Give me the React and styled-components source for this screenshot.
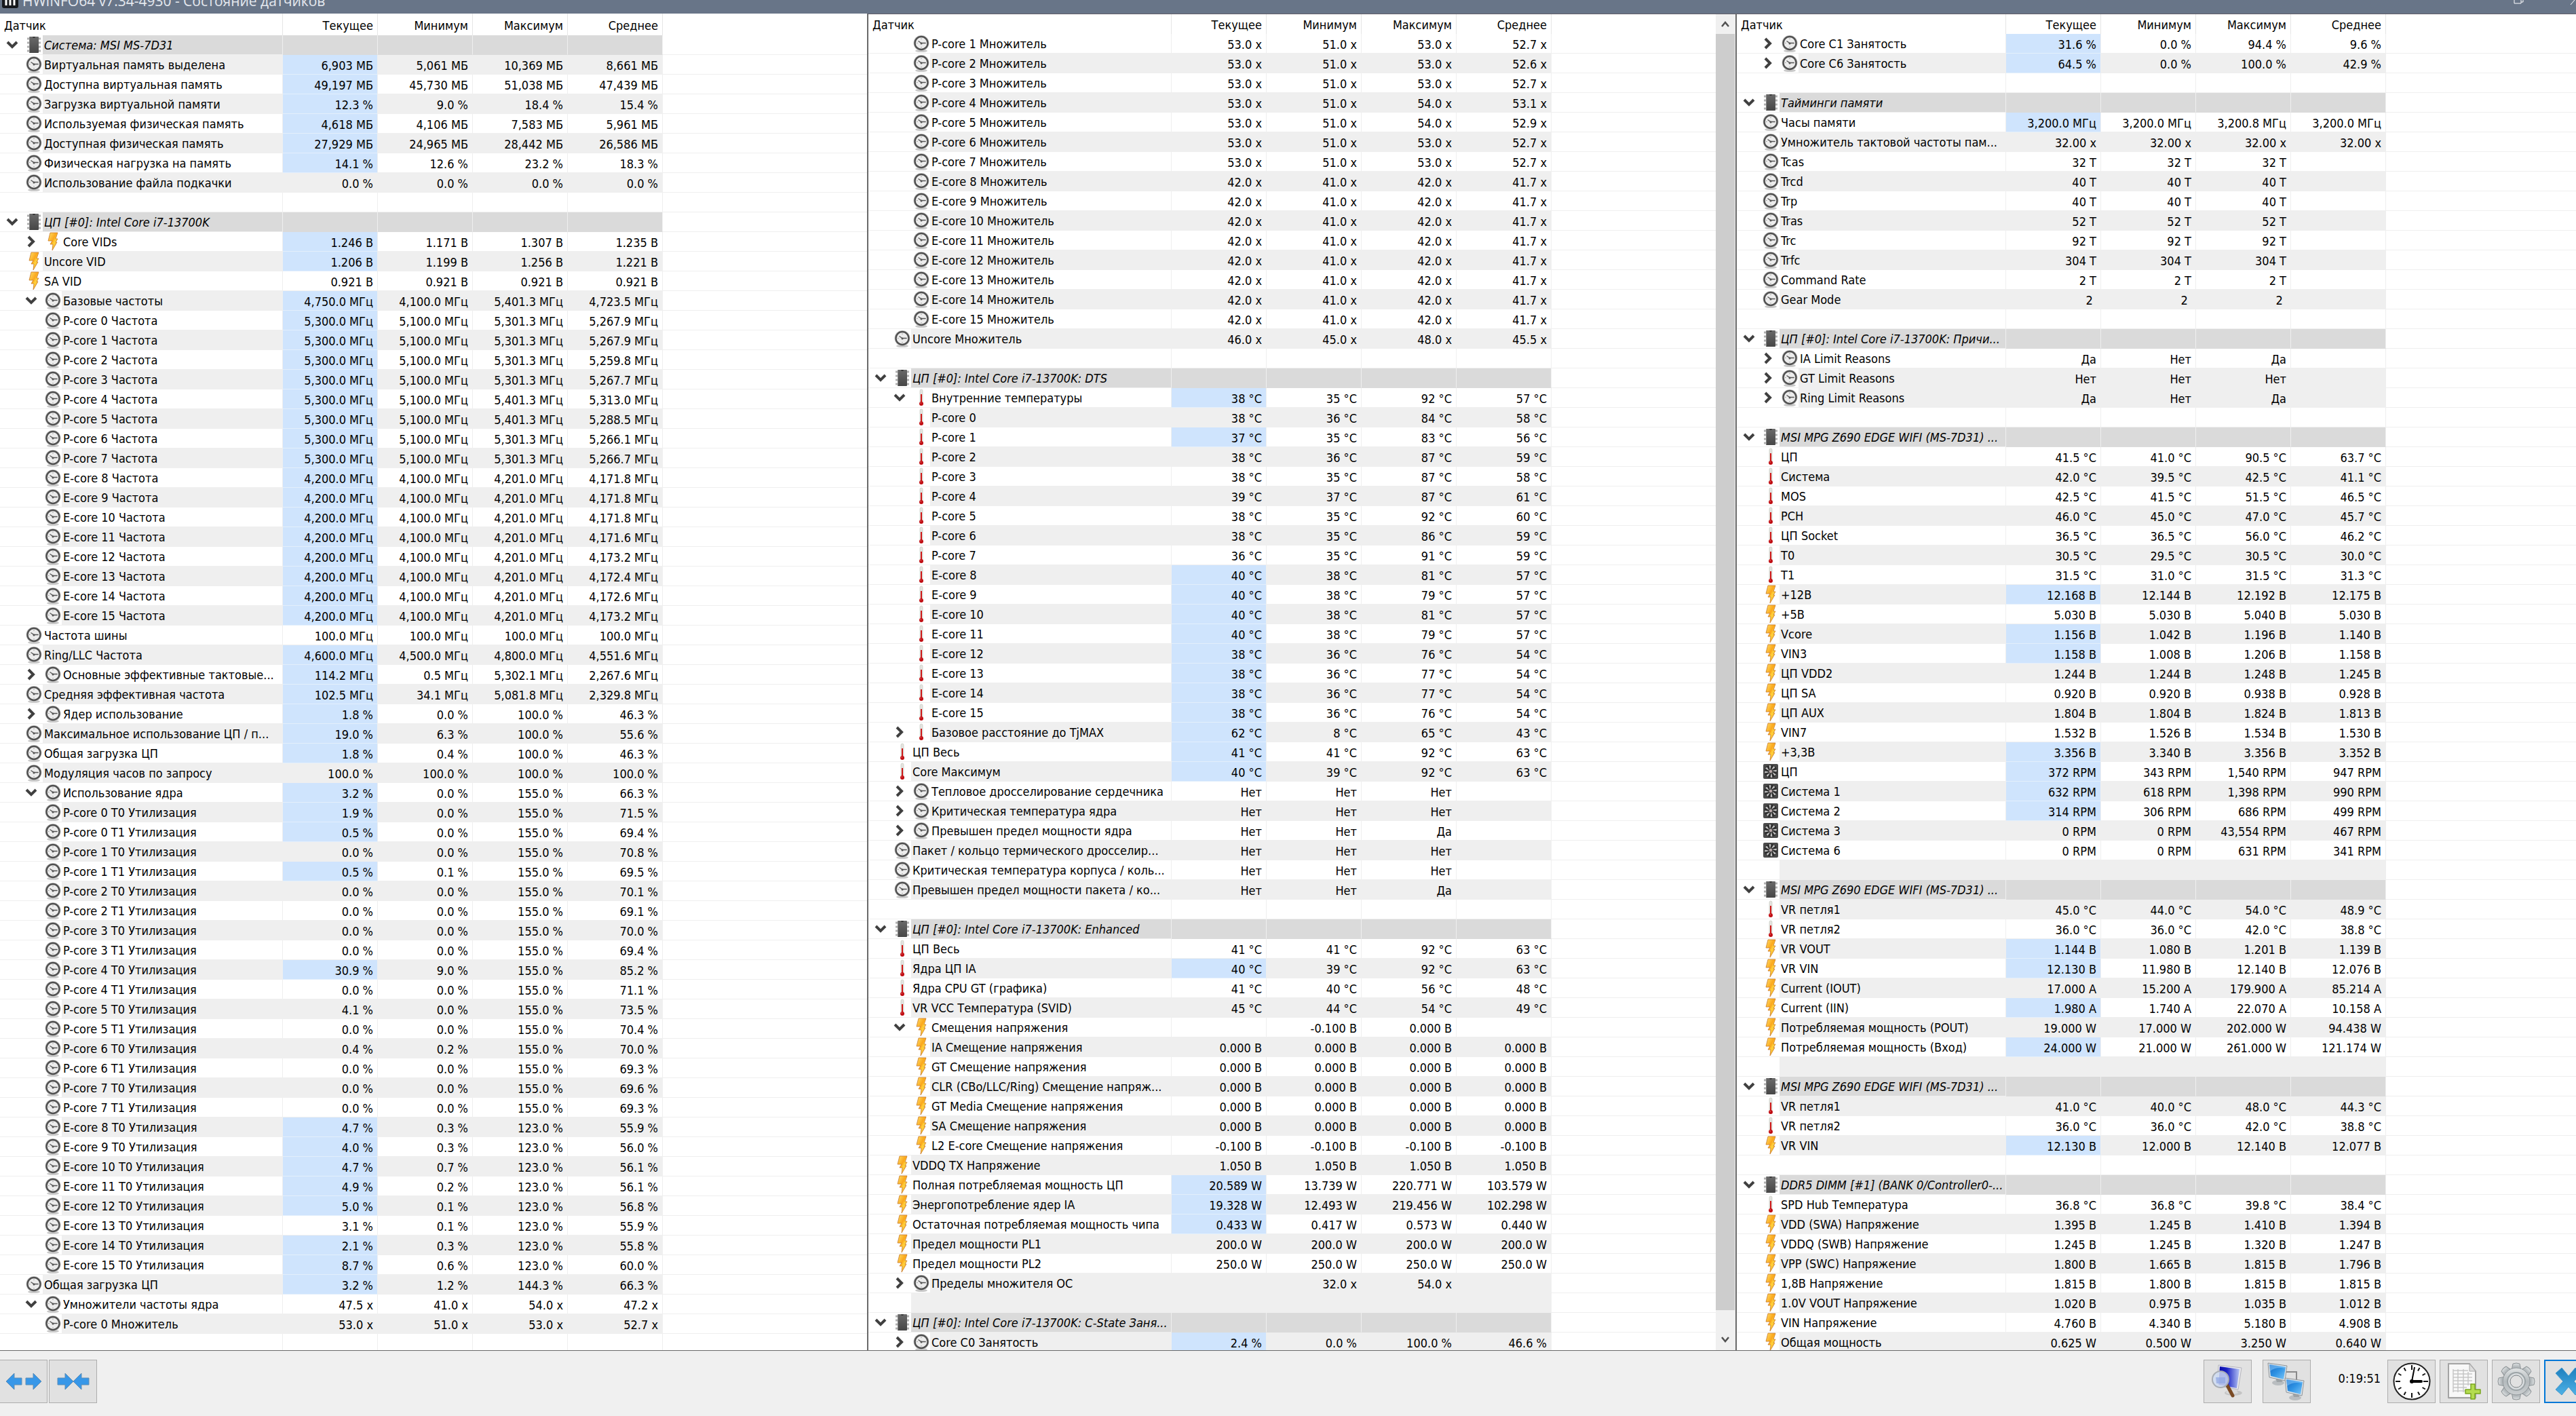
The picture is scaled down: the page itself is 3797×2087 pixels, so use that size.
import React from "react";
import styled, { createGlobalStyle, css } from "styled-components";

const GlobalStyle = createGlobalStyle`
  * {
    box-sizing: border-box;
  }
  body {
    margin: 0;
    background: #f0f0f0;
    color: #000;
    font-family: "DejaVu Sans Condensed", Tahoma, "Noto Sans", sans-serif;
    font-size: 18px;
  }
  button {
    font: inherit;
    padding: 0;
  }
`;

const Window = styled.div`
  display: flex;
  flex-direction: column;
  height: 100vh;
  overflow: hidden;
`;

const TitleBar = styled.header`
  display: flex;
  align-items: flex-end;
  justify-content: space-between;
  flex: none;
  height: 20px;
  padding-left: 3px;
  background: #687588;
`;

const TitleGroup = styled.div`
  display: flex;
  align-items: flex-end;
  gap: 6px;
  padding-bottom: 4px;
`;

const Title = styled.h1`
  margin: 0;
  color: #e4e8ee;
  font-family: "Open Sans", "Noto Sans", sans-serif;
  font-size: 21px;
  font-weight: 400;
  line-height: 30px;
  white-space: nowrap;
`;

const AppIcon = styled.svg`
  flex: none;
  margin-bottom: 4px;
`;

const WindowButtons = styled.div`
  display: flex;
  gap: 60px;
  height: 20px;
`;

const WindowButton = styled.button`
  display: flex;
  width: 16px;
  height: 20px;
  border: 0;
  background: none;
`;

const Panels = styled.main`
  display: grid;
  grid-template-columns: minmax(0, 1278fr) minmax(0, 1280fr) minmax(0, 1239fr);
  flex: 1;
  min-height: 0;
  background: #fff;
`;

const Panel = styled.section`
  display: flex;
  min-height: 0;
  overflow: hidden;
  border-left: ${(props) => (props.$divided ? "2px solid #696969" : "0")};
  border-top: ${(props) => (props.$divided ? "1px solid #605d68" : "0")};
`;

const TableArea = styled.div`
  flex: 1;
  min-width: 0;
  overflow: hidden;
`;

const Table = styled.table`
  width: 100%;
  table-layout: fixed;
  border-collapse: separate;
  border-spacing: 0;
`;

const Col = styled.col`
  width: ${(props) => props.$width}px;
`;

const HeadCell = styled.th`
  height: ${(props) => (props.$divided ? 29 : 32)}px;
  padding: ${(props) => (props.$first ? "2px 6px 0" : "2px 6px 0 0")};
  border-right: 1px solid #e5e5e5;
  font-weight: 400;
  text-align: ${(props) => (props.$first ? "left" : "right")};
  white-space: nowrap;

  &:last-child {
    border-right: 0;
  }
`;

const rowColor = (props) =>
  props.$group ? "#dadada" : props.$alt ? "#efefef" : "#fff";

const cell = css`
  height: 29px;
  padding: 0;
  border-bottom: 1px solid #efefef;
  font-weight: 400;
  white-space: nowrap;
  overflow: hidden;
`;

const NameCell = styled.th`
  ${cell}
  text-align: left;
`;

const ValueCell = styled.td`
  ${cell}
  padding: 2px 6px 0 0;
  border-right: 1px solid #efefef;
  border-bottom-color: ${(props) =>
    props.$hot ? "#e3effc" : props.$group ? "#dadada" : "#efefef"};
  background: ${(props) => (props.$hot ? "#cfe4fd" : rowColor(props))};
  text-align: right;
`;

const FillerCell = styled.td`
  ${cell}
`;

const NameLine = styled.div`
  display: flex;
  align-items: stretch;
  height: 28px;
  padding-left: ${(props) => props.$depth * 28}px;
`;

const ToggleSlot = styled.span`
  display: flex;
  flex: none;
  align-items: center;
  justify-content: center;
  width: 36px;
`;

const Toggle = styled.button`
  display: flex;
  align-items: center;
  justify-content: center;
  width: 20px;
  height: 20px;
  border: 0;
  background: none;
`;

const IconSlot = styled.span`
  display: flex;
  flex: none;
  align-items: center;
  justify-content: center;
  width: 27px;
`;

const Label = styled.span`
  flex: 1;
  min-width: 0;
  padding: 2px 0 0 2px;
  overflow: hidden;
  border-right: 1px solid #efefef;
  background: ${rowColor};
  font-style: ${(props) => (props.$group ? "italic" : "normal")};
  line-height: 26px;
`;

const ScrollBar = styled.div`
  display: flex;
  flex: none;
  flex-direction: column;
  width: 29px;
  padding-right: 1px;
  background: #f0f0f0;
`;

const ScrollButton = styled.button`
  display: flex;
  align-items: center;
  justify-content: center;
  height: ${(props) => (props.$down ? 30 : 29)}px;
  border: 0;
  background: #f0f0f0;
`;

const ScrollTrack = styled.div`
  flex: 1;
  padding-bottom: 29px;
`;

const ScrollThumb = styled.div`
  height: 100%;
  background: #cdcdcd;
`;

const Footer = styled.footer`
  display: flex;
  align-items: center;
  justify-content: space-between;
  flex: none;
  padding: 13px 0 19px;
  border-top: 1px solid #696969;
  background: #f0f0f0;
`;

const Tools = styled.div`
  display: flex;
  align-items: center;
  gap: ${(props) => props.$gap}px;
`;

const LeftTools = styled(Tools)`
  margin-left: -1px;
`;

const RightTools = styled(Tools)`
  margin-right: -24px;
`;

const ToolButton = styled.button`
  display: flex;
  align-items: center;
  justify-content: center;
  flex: none;
  width: 71px;
  height: 64px;
  border: ${(props) => (props.$active ? "2px solid #0078d7" : "1px solid #adadad")};
  background: #e1e1e1;
`;

const Elapsed = styled.time`
  padding: 0 3px 9px 34px;
`;

const Defs = styled.svg`
  position: absolute;
  width: 0;
  height: 0;
`;

const Gradients = () => (
  <Defs aria-hidden="true">
    <defs>
      <linearGradient id="bolt" x1="0" y1="0" x2="1" y2="1">
        <stop offset="0" stopColor="#ffe26a" />
        <stop offset="0.45" stopColor="#fba71c" />
        <stop offset="0.6" stopColor="#ffd23c" />
        <stop offset="1" stopColor="#f59a1a" />
      </linearGradient>
      <linearGradient id="chip" x1="0" y1="0" x2="0" y2="1">
        <stop offset="0" stopColor="#6a6a6a" />
        <stop offset="1" stopColor="#464646" />
      </linearGradient>
      <linearGradient id="screen" x1="0" y1="0" x2="1" y2="1">
        <stop offset="0" stopColor="#1668c4" />
        <stop offset="0.5" stopColor="#2f93e4" />
        <stop offset="1" stopColor="#7cc7fa" />
      </linearGradient>
      <linearGradient id="navy" x1="0" y1="0" x2="1" y2="0">
        <stop offset="0" stopColor="#0808a8" />
        <stop offset="0.4" stopColor="#1c24c4" />
        <stop offset="1" stopColor="#b4c4f4" />
      </linearGradient>
      <linearGradient id="metal" x1="0" y1="0" x2="0" y2="1">
        <stop offset="0" stopColor="#dfe2e3" />
        <stop offset="0.5" stopColor="#b4babd" />
        <stop offset="1" stopColor="#c9cdcf" />
      </linearGradient>
      <linearGradient id="cross" x1="0" y1="0" x2="0" y2="1">
        <stop offset="0" stopColor="#1e7fbe" />
        <stop offset="1" stopColor="#4db1e6" />
      </linearGradient>
    </defs>
  </Defs>
);

const Clock = () => (
  <svg width="24" height="26" viewBox="0 0 24 26">
    <ellipse cx="12" cy="24" rx="9" ry="2" fill="#c9c9c9" />
    <circle cx="12" cy="12.500" r="11.500" fill="#c4c4c4" />
    <circle cx="12" cy="12.500" r="9.500" fill="#ececec" stroke="#505050" strokeWidth="2.400" />
    <path d="M12 5.500v1.500M12 18v1.500M5 12.500h1.500M17.500 12.500H19" stroke="#999" />
    <path d="M7.500 9.500l4.500 3h6.500" fill="none" stroke="#555" strokeWidth="1.300" />
    <circle cx="12" cy="13" r="1.500" fill="#555" />
  </svg>
);

const Bolt = () => (
  <svg width="16" height="28" viewBox="0 0 16 28">
    <path
      d="M4 1h11l-3 9h3l-3 5h2L7 27l1-9H4l3-5H1z"
      fill="url(#bolt)"
      stroke="#c8792a"
      strokeWidth="0.8"
      strokeLinejoin="round"
    />
  </svg>
);

const Chip = () => (
  <svg width="20" height="26" viewBox="0 0 20 26">
    {[4, 10, 16, 22].map((y) => (
      <path key={y} d={`M0 ${y}h20`} stroke="#b0b0b0" strokeWidth="3" />
    ))}
    <rect x="3" y="1" width="14" height="24" rx="1" fill="url(#chip)" />
    <path d="M3.500 2v22" stroke="#858585" />
    <path d="M8 1a2 2 0 0 0 4 0z" fill="#333" />
  </svg>
);

const Thermometer = () => (
  <svg width="8" height="26" viewBox="0 0 8 26">
    <rect x="2" y="1" width="4" height="20" rx="2" fill="#e4e4e0" stroke="#c4c8bf" strokeWidth="0.7" />
    <path d="M4 8v13" stroke="#d01818" strokeWidth="2" />
    <circle cx="4" cy="22" r="3" fill="#c00f14" />
    <circle cx="3.200" cy="21" r="0.8" fill="#ee7070" />
  </svg>
);

const Fan = () => (
  <svg width="22" height="22" viewBox="0 0 22 22">
    <rect width="22" height="22" rx="2" fill="#4a4a4a" />
    <circle cx="11" cy="11" r="9.500" fill="#2e2e2e" />
    {[0, 45, 90, 135, 180, 225, 270, 315].map((a) => (
      <path key={a} d="M10 9L8.500 2.500q2-1 3 .5z" fill="#c4c4c4" transform={`rotate(${a} 11 11)`} />
    ))}
    <circle cx="11" cy="11" r="2.800" fill="#b9a9a9" stroke="#444" />
  </svg>
);

const icons = { clock: Clock, bolt: Bolt, chip: Chip, temp: Thermometer, fan: Fan };

const Chevron = ({ open }) =>
  open ? (
    <svg width="18" height="12" viewBox="0 0 18 12">
      <path d="M2 2l7 7 7-7" fill="none" stroke="#404040" strokeWidth="4" />
    </svg>
  ) : (
    <svg width="12" height="18" viewBox="0 0 12 18">
      <path d="M2 2l7 7-7 7" fill="none" stroke="#404040" strokeWidth="4" />
    </svg>
  );

const ScrollArrow = ({ down }) => (
  <svg width="14" height="12" viewBox="0 0 14 12">
    <path
      d={down ? "M2 2l5 6 5-6" : "M2 9l5-6 5 6"}
      fill="none"
      stroke="#505050"
      strokeWidth="2.500"
    />
  </svg>
);

// A row is [icon, depth, name, "current|minimum|maximum|average", flags]
const group = (name) => ["chip", 0, name, "|||", "group open"];
const blank = (flags = "") => [null, 0, "", "|||", flags];

const systemRows = [
  group("Система: MSI MS-7D31"),
  ["clock", 0, "Виртуальная память выделена", "6,903 МБ|5,061 МБ|10,369 МБ|8,661 МБ", "hot"],
  ["clock", 0, "Доступна виртуальная память", "49,197 МБ|45,730 МБ|51,038 МБ|47,439 МБ", "hot"],
  ["clock", 0, "Загрузка виртуальной памяти", "12.3 %|9.0 %|18.4 %|15.4 %", "hot"],
  ["clock", 0, "Используемая физическая память", "4,618 МБ|4,106 МБ|7,583 МБ|5,961 МБ", "hot"],
  ["clock", 0, "Доступная физическая память", "27,929 МБ|24,965 МБ|28,442 МБ|26,586 МБ", "hot"],
  ["clock", 0, "Физическая нагрузка на память", "14.1 %|12.6 %|23.2 %|18.3 %", "hot"],
  ["clock", 0, "Использование файла подкачки", "0.0 %|0.0 %|0.0 %|0.0 %"],
  blank(),
  group("ЦП [#0]: Intel Core i7-13700K"),
  ["bolt", 1, "Core VIDs", "1.246 В|1.171 В|1.307 В|1.235 В", "hot closed"],
  ["bolt", 0, "Uncore VID", "1.206 В|1.199 В|1.256 В|1.221 В", "hot"],
  ["bolt", 0, "SA VID", "0.921 В|0.921 В|0.921 В|0.921 В"],
  ["clock", 1, "Базовые частоты", "4,750.0 МГц|4,100.0 МГц|5,401.3 МГц|4,723.5 МГц", "hot open"],
  ["clock", 1, "P-core 0 Частота", "5,300.0 МГц|5,100.0 МГц|5,301.3 МГц|5,267.9 МГц", "hot"],
  ["clock", 1, "P-core 1 Частота", "5,300.0 МГц|5,100.0 МГц|5,301.3 МГц|5,267.9 МГц", "hot"],
  ["clock", 1, "P-core 2 Частота", "5,300.0 МГц|5,100.0 МГц|5,301.3 МГц|5,259.8 МГц", "hot"],
  ["clock", 1, "P-core 3 Частота", "5,300.0 МГц|5,100.0 МГц|5,301.3 МГц|5,267.7 МГц", "hot"],
  ["clock", 1, "P-core 4 Частота", "5,300.0 МГц|5,100.0 МГц|5,401.3 МГц|5,313.0 МГц", "hot"],
  ["clock", 1, "P-core 5 Частота", "5,300.0 МГц|5,100.0 МГц|5,401.3 МГц|5,288.5 МГц", "hot"],
  ["clock", 1, "P-core 6 Частота", "5,300.0 МГц|5,100.0 МГц|5,301.3 МГц|5,266.1 МГц", "hot"],
  ["clock", 1, "P-core 7 Частота", "5,300.0 МГц|5,100.0 МГц|5,301.3 МГц|5,266.7 МГц", "hot"],
  ["clock", 1, "E-core 8 Частота", "4,200.0 МГц|4,100.0 МГц|4,201.0 МГц|4,171.8 МГц", "hot"],
  ["clock", 1, "E-core 9 Частота", "4,200.0 МГц|4,100.0 МГц|4,201.0 МГц|4,171.8 МГц", "hot"],
  ["clock", 1, "E-core 10 Частота", "4,200.0 МГц|4,100.0 МГц|4,201.0 МГц|4,171.8 МГц", "hot"],
  ["clock", 1, "E-core 11 Частота", "4,200.0 МГц|4,100.0 МГц|4,201.0 МГц|4,171.6 МГц", "hot"],
  ["clock", 1, "E-core 12 Частота", "4,200.0 МГц|4,100.0 МГц|4,201.0 МГц|4,173.2 МГц", "hot"],
  ["clock", 1, "E-core 13 Частота", "4,200.0 МГц|4,100.0 МГц|4,201.0 МГц|4,172.4 МГц", "hot"],
  ["clock", 1, "E-core 14 Частота", "4,200.0 МГц|4,100.0 МГц|4,201.0 МГц|4,172.6 МГц", "hot"],
  ["clock", 1, "E-core 15 Частота", "4,200.0 МГц|4,100.0 МГц|4,201.0 МГц|4,173.2 МГц", "hot"],
  ["clock", 0, "Частота шины", "100.0 МГц|100.0 МГц|100.0 МГц|100.0 МГц"],
  ["clock", 0, "Ring/LLC Частота", "4,600.0 МГц|4,500.0 МГц|4,800.0 МГц|4,551.6 МГц", "hot"],
  ["clock", 1, "Основные эффективные тактовые...", "114.2 МГц|0.5 МГц|5,302.1 МГц|2,267.6 МГц", "hot closed"],
  ["clock", 0, "Средняя эффективная частота", "102.5 МГц|34.1 МГц|5,081.8 МГц|2,329.8 МГц", "hot"],
  ["clock", 1, "Ядер использование", "1.8 %|0.0 %|100.0 %|46.3 %", "hot closed"],
  ["clock", 0, "Максимальное использование ЦП / п...", "19.0 %|6.3 %|100.0 %|55.6 %", "hot"],
  ["clock", 0, "Общая загрузка ЦП", "1.8 %|0.4 %|100.0 %|46.3 %", "hot"],
  ["clock", 0, "Модуляция часов по запросу", "100.0 %|100.0 %|100.0 %|100.0 %"],
  ["clock", 1, "Использование ядра", "3.2 %|0.0 %|155.0 %|66.3 %", "hot open"],
  ["clock", 1, "P-core 0 T0 Утилизация", "1.9 %|0.0 %|155.0 %|71.5 %", "hot"],
  ["clock", 1, "P-core 0 T1 Утилизация", "0.5 %|0.0 %|155.0 %|69.4 %", "hot"],
  ["clock", 1, "P-core 1 T0 Утилизация", "0.0 %|0.0 %|155.0 %|70.8 %"],
  ["clock", 1, "P-core 1 T1 Утилизация", "0.5 %|0.1 %|155.0 %|69.5 %", "hot"],
  ["clock", 1, "P-core 2 T0 Утилизация", "0.0 %|0.0 %|155.0 %|70.1 %"],
  ["clock", 1, "P-core 2 T1 Утилизация", "0.0 %|0.0 %|155.0 %|69.1 %"],
  ["clock", 1, "P-core 3 T0 Утилизация", "0.0 %|0.0 %|155.0 %|70.0 %"],
  ["clock", 1, "P-core 3 T1 Утилизация", "0.0 %|0.0 %|155.0 %|69.4 %"],
  ["clock", 1, "P-core 4 T0 Утилизация", "30.9 %|9.0 %|155.0 %|85.2 %", "hot"],
  ["clock", 1, "P-core 4 T1 Утилизация", "0.0 %|0.0 %|155.0 %|71.1 %"],
  ["clock", 1, "P-core 5 T0 Утилизация", "4.1 %|0.0 %|155.0 %|73.5 %"],
  ["clock", 1, "P-core 5 T1 Утилизация", "0.0 %|0.0 %|155.0 %|70.4 %"],
  ["clock", 1, "P-core 6 T0 Утилизация", "0.4 %|0.2 %|155.0 %|70.0 %"],
  ["clock", 1, "P-core 6 T1 Утилизация", "0.0 %|0.0 %|155.0 %|69.3 %"],
  ["clock", 1, "P-core 7 T0 Утилизация", "0.0 %|0.0 %|155.0 %|69.6 %"],
  ["clock", 1, "P-core 7 T1 Утилизация", "0.0 %|0.0 %|155.0 %|69.3 %"],
  ["clock", 1, "E-core 8 T0 Утилизация", "4.7 %|0.3 %|123.0 %|55.9 %", "hot"],
  ["clock", 1, "E-core 9 T0 Утилизация", "4.0 %|0.3 %|123.0 %|56.0 %", "hot"],
  ["clock", 1, "E-core 10 T0 Утилизация", "4.7 %|0.7 %|123.0 %|56.1 %", "hot"],
  ["clock", 1, "E-core 11 T0 Утилизация", "4.9 %|0.2 %|123.0 %|56.1 %", "hot"],
  ["clock", 1, "E-core 12 T0 Утилизация", "5.0 %|0.1 %|123.0 %|56.8 %", "hot"],
  ["clock", 1, "E-core 13 T0 Утилизация", "3.1 %|0.1 %|123.0 %|55.9 %"],
  ["clock", 1, "E-core 14 T0 Утилизация", "2.1 %|0.3 %|123.0 %|55.8 %", "hot"],
  ["clock", 1, "E-core 15 T0 Утилизация", "8.7 %|0.6 %|123.0 %|60.0 %", "hot"],
  ["clock", 0, "Общая загрузка ЦП", "3.2 %|1.2 %|144.3 %|66.3 %", "hot"],
  ["clock", 1, "Умножители частоты ядра", "47.5 x|41.0 x|54.0 x|47.2 x", "open"],
  ["clock", 1, "P-core 0 Множитель", "53.0 x|51.0 x|53.0 x|52.7 x"],
  blank(),
];

const cpuRows = [
  ["clock", 1, "P-core 1 Множитель", "53.0 x|51.0 x|53.0 x|52.7 x"],
  ["clock", 1, "P-core 2 Множитель", "53.0 x|51.0 x|53.0 x|52.6 x"],
  ["clock", 1, "P-core 3 Множитель", "53.0 x|51.0 x|53.0 x|52.7 x"],
  ["clock", 1, "P-core 4 Множитель", "53.0 x|51.0 x|54.0 x|53.1 x"],
  ["clock", 1, "P-core 5 Множитель", "53.0 x|51.0 x|54.0 x|52.9 x"],
  ["clock", 1, "P-core 6 Множитель", "53.0 x|51.0 x|53.0 x|52.7 x"],
  ["clock", 1, "P-core 7 Множитель", "53.0 x|51.0 x|53.0 x|52.7 x"],
  ["clock", 1, "E-core 8 Множитель", "42.0 x|41.0 x|42.0 x|41.7 x"],
  ["clock", 1, "E-core 9 Множитель", "42.0 x|41.0 x|42.0 x|41.7 x"],
  ["clock", 1, "E-core 10 Множитель", "42.0 x|41.0 x|42.0 x|41.7 x"],
  ["clock", 1, "E-core 11 Множитель", "42.0 x|41.0 x|42.0 x|41.7 x"],
  ["clock", 1, "E-core 12 Множитель", "42.0 x|41.0 x|42.0 x|41.7 x"],
  ["clock", 1, "E-core 13 Множитель", "42.0 x|41.0 x|42.0 x|41.7 x"],
  ["clock", 1, "E-core 14 Множитель", "42.0 x|41.0 x|42.0 x|41.7 x"],
  ["clock", 1, "E-core 15 Множитель", "42.0 x|41.0 x|42.0 x|41.7 x"],
  ["clock", 0, "Uncore Множитель", "46.0 x|45.0 x|48.0 x|45.5 x"],
  blank(),
  group("ЦП [#0]: Intel Core i7-13700K: DTS"),
  ["temp", 1, "Внутренние температуры", "38 °C|35 °C|92 °C|57 °C", "hot open"],
  ["temp", 1, "P-core 0", "38 °C|36 °C|84 °C|58 °C"],
  ["temp", 1, "P-core 1", "37 °C|35 °C|83 °C|56 °C", "hot"],
  ["temp", 1, "P-core 2", "38 °C|36 °C|87 °C|59 °C"],
  ["temp", 1, "P-core 3", "38 °C|35 °C|87 °C|58 °C"],
  ["temp", 1, "P-core 4", "39 °C|37 °C|87 °C|61 °C"],
  ["temp", 1, "P-core 5", "38 °C|35 °C|92 °C|60 °C"],
  ["temp", 1, "P-core 6", "38 °C|35 °C|86 °C|59 °C"],
  ["temp", 1, "P-core 7", "36 °C|35 °C|91 °C|59 °C"],
  ["temp", 1, "E-core 8", "40 °C|38 °C|81 °C|57 °C", "hot"],
  ["temp", 1, "E-core 9", "40 °C|38 °C|79 °C|57 °C", "hot"],
  ["temp", 1, "E-core 10", "40 °C|38 °C|81 °C|57 °C", "hot"],
  ["temp", 1, "E-core 11", "40 °C|38 °C|79 °C|57 °C", "hot"],
  ["temp", 1, "E-core 12", "38 °C|36 °C|76 °C|54 °C", "hot"],
  ["temp", 1, "E-core 13", "38 °C|36 °C|77 °C|54 °C", "hot"],
  ["temp", 1, "E-core 14", "38 °C|36 °C|77 °C|54 °C", "hot"],
  ["temp", 1, "E-core 15", "38 °C|36 °C|76 °C|54 °C", "hot"],
  ["temp", 1, "Базовое расстояние до TjMAX", "62 °C|8 °C|65 °C|43 °C", "hot closed"],
  ["temp", 0, "ЦП Весь", "41 °C|41 °C|92 °C|63 °C", "hot"],
  ["temp", 0, "Core Максимум", "40 °C|39 °C|92 °C|63 °C", "hot"],
  ["clock", 1, "Тепловое дросселирование сердечника", "Нет|Нет|Нет|", "closed"],
  ["clock", 1, "Критическая температура ядра", "Нет|Нет|Нет|", "closed"],
  ["clock", 1, "Превышен предел мощности ядра", "Нет|Нет|Да|", "closed"],
  ["clock", 0, "Пакет / кольцо термического дросселир...", "Нет|Нет|Нет|"],
  ["clock", 0, "Критическая температура корпуса / коль...", "Нет|Нет|Нет|"],
  ["clock", 0, "Превышен предел мощности пакета / ко...", "Нет|Нет|Да|"],
  blank(),
  group("ЦП [#0]: Intel Core i7-13700K: Enhanced"),
  ["temp", 0, "ЦП Весь", "41 °C|41 °C|92 °C|63 °C"],
  ["temp", 0, "Ядра ЦП IA", "40 °C|39 °C|92 °C|63 °C", "hot"],
  ["temp", 0, "Ядра CPU GT (графика)", "41 °C|40 °C|56 °C|48 °C"],
  ["temp", 0, "VR VCC Температура (SVID)", "45 °C|44 °C|54 °C|49 °C"],
  ["bolt", 1, "Смещения напряжения", "|-0.100 В|0.000 В|", "open"],
  ["bolt", 1, "IA Смещение напряжения", "0.000 В|0.000 В|0.000 В|0.000 В"],
  ["bolt", 1, "GT Смещение напряжения", "0.000 В|0.000 В|0.000 В|0.000 В"],
  ["bolt", 1, "CLR (CBo/LLC/Ring) Смещение напряж...", "0.000 В|0.000 В|0.000 В|0.000 В"],
  ["bolt", 1, "GT Media Смещение напряжения", "0.000 В|0.000 В|0.000 В|0.000 В"],
  ["bolt", 1, "SA Смещение напряжения", "0.000 В|0.000 В|0.000 В|0.000 В"],
  ["bolt", 1, "L2 E-core Смещение напряжения", "-0.100 В|-0.100 В|-0.100 В|-0.100 В"],
  ["bolt", 0, "VDDQ TX Напряжение", "1.050 В|1.050 В|1.050 В|1.050 В"],
  ["bolt", 0, "Полная потребляемая мощность ЦП", "20.589 W|13.739 W|220.771 W|103.579 W", "hot"],
  ["bolt", 0, "Энергопотребление ядер IA", "19.328 W|12.493 W|219.456 W|102.298 W", "hot"],
  ["bolt", 0, "Остаточная потребляемая мощность чипа", "0.433 W|0.417 W|0.573 W|0.440 W", "hot"],
  ["bolt", 0, "Предел мощности PL1", "200.0 W|200.0 W|200.0 W|200.0 W"],
  ["bolt", 0, "Предел мощности PL2", "250.0 W|250.0 W|250.0 W|250.0 W"],
  ["clock", 1, "Пределы множителя ОС", "|32.0 x|54.0 x|", "closed"],
  blank("same"),
  group("ЦП [#0]: Intel Core i7-13700K: C-State Заня..."),
  ["clock", 1, "Core C0 Занятость", "2.4 %|0.0 %|100.0 %|46.6 %", "hot closed"],
];

const boardRows = [
  ["clock", 1, "Core C1 Занятость", "31.6 %|0.0 %|94.4 %|9.6 %", "hot closed"],
  ["clock", 1, "Core C6 Занятость", "64.5 %|0.0 %|100.0 %|42.9 %", "hot closed"],
  blank(),
  group("Тайминги памяти"),
  ["clock", 0, "Часы памяти", "3,200.0 МГц|3,200.0 МГц|3,200.8 МГц|3,200.0 МГц", "hot"],
  ["clock", 0, "Умножитель тактовой частоты пам...", "32.00 x|32.00 x|32.00 x|32.00 x"],
  ["clock", 0, "Tcas", "32 T|32 T|32 T|"],
  ["clock", 0, "Trcd", "40 T|40 T|40 T|"],
  ["clock", 0, "Trp", "40 T|40 T|40 T|"],
  ["clock", 0, "Tras", "52 T|52 T|52 T|"],
  ["clock", 0, "Trc", "92 T|92 T|92 T|"],
  ["clock", 0, "Trfc", "304 T|304 T|304 T|"],
  ["clock", 0, "Command Rate", "2 T|2 T|2 T|"],
  ["clock", 0, "Gear Mode", "2\u00a0|2\u00a0|2\u00a0|"],
  blank(),
  group("ЦП [#0]: Intel Core i7-13700K: Причи..."),
  ["clock", 1, "IA Limit Reasons", "Да|Нет|Да|", "closed"],
  ["clock", 1, "GT Limit Reasons", "Нет|Нет|Нет|", "closed"],
  ["clock", 1, "Ring Limit Reasons", "Да|Нет|Да|", "closed same"],
  blank(),
  group("MSI MPG Z690 EDGE WIFI (MS-7D31) ..."),
  ["temp", 0, "ЦП", "41.5 °C|41.0 °C|90.5 °C|63.7 °C"],
  ["temp", 0, "Система", "42.0 °C|39.5 °C|42.5 °C|41.1 °C"],
  ["temp", 0, "MOS", "42.5 °C|41.5 °C|51.5 °C|46.5 °C"],
  ["temp", 0, "PCH", "46.0 °C|45.0 °C|47.0 °C|45.7 °C"],
  ["temp", 0, "ЦП Socket", "36.5 °C|36.5 °C|56.0 °C|46.2 °C"],
  ["temp", 0, "T0", "30.5 °C|29.5 °C|30.5 °C|30.0 °C"],
  ["temp", 0, "T1", "31.5 °C|31.0 °C|31.5 °C|31.3 °C"],
  ["bolt", 0, "+12В", "12.168 В|12.144 В|12.192 В|12.175 В", "hot"],
  ["bolt", 0, "+5В", "5.030 В|5.030 В|5.040 В|5.030 В"],
  ["bolt", 0, "Vcore", "1.156 В|1.042 В|1.196 В|1.140 В", "hot"],
  ["bolt", 0, "VIN3", "1.158 В|1.008 В|1.206 В|1.158 В", "hot"],
  ["bolt", 0, "ЦП VDD2", "1.244 В|1.244 В|1.248 В|1.245 В"],
  ["bolt", 0, "ЦП SA", "0.920 В|0.920 В|0.938 В|0.928 В"],
  ["bolt", 0, "ЦП AUX", "1.804 В|1.804 В|1.824 В|1.813 В"],
  ["bolt", 0, "VIN7", "1.532 В|1.526 В|1.534 В|1.530 В"],
  ["bolt", 0, "+3,3В", "3.356 В|3.340 В|3.356 В|3.352 В", "hot"],
  ["fan", 0, "ЦП", "372 RPM|343 RPM|1,540 RPM|947 RPM", "hot"],
  ["fan", 0, "Система 1", "632 RPM|618 RPM|1,398 RPM|990 RPM", "hot"],
  ["fan", 0, "Система 2", "314 RPM|306 RPM|686 RPM|499 RPM", "hot"],
  ["fan", 0, "Система 3", "0 RPM|0 RPM|43,554 RPM|467 RPM"],
  ["fan", 0, "Система 6", "0 RPM|0 RPM|631 RPM|341 RPM"],
  blank(),
  group("MSI MPG Z690 EDGE WIFI (MS-7D31) ..."),
  ["temp", 0, "VR петля1", "45.0 °C|44.0 °C|54.0 °C|48.9 °C"],
  ["temp", 0, "VR петля2", "36.0 °C|36.0 °C|42.0 °C|38.8 °C"],
  ["bolt", 0, "VR VOUT", "1.144 В|1.080 В|1.201 В|1.139 В", "hot"],
  ["bolt", 0, "VR VIN", "12.130 В|11.980 В|12.140 В|12.076 В", "hot"],
  ["bolt", 0, "Current (IOUT)", "17.000 A|15.200 A|179.900 A|85.214 A"],
  ["bolt", 0, "Current (IIN)", "1.980 A|1.740 A|22.070 A|10.158 A", "hot"],
  ["bolt", 0, "Потребляемая мощность (POUT)", "19.000 W|17.000 W|202.000 W|94.438 W"],
  ["bolt", 0, "Потребляемая мощность (Вход)", "24.000 W|21.000 W|261.000 W|121.174 W", "hot"],
  blank(),
  group("MSI MPG Z690 EDGE WIFI (MS-7D31) ..."),
  ["temp", 0, "VR петля1", "41.0 °C|40.0 °C|48.0 °C|44.3 °C"],
  ["temp", 0, "VR петля2", "36.0 °C|36.0 °C|42.0 °C|38.8 °C"],
  ["bolt", 0, "VR VIN", "12.130 В|12.000 В|12.140 В|12.077 В", "hot"],
  blank(),
  group("DDR5 DIMM [#1] (BANK 0/Controller0-..."),
  ["temp", 0, "SPD Hub Температура", "36.8 °C|36.8 °C|39.8 °C|38.4 °C"],
  ["bolt", 0, "VDD (SWA) Напряжение", "1.395 В|1.245 В|1.410 В|1.394 В"],
  ["bolt", 0, "VDDQ (SWB) Напряжение", "1.245 В|1.245 В|1.320 В|1.247 В"],
  ["bolt", 0, "VPP (SWC) Напряжение", "1.800 В|1.665 В|1.815 В|1.796 В"],
  ["bolt", 0, "1,8В Напряжение", "1.815 В|1.800 В|1.815 В|1.815 В"],
  ["bolt", 0, "1.0V VOUT Напряжение", "1.020 В|0.975 В|1.035 В|1.012 В"],
  ["bolt", 0, "VIN Напряжение", "4.760 В|4.340 В|5.180 В|4.908 В"],
  ["bolt", 0, "Общая мощность", "0.625 W|0.500 W|3.250 W|0.640 W"],
];

// Rows alternate; a "same" row keeps the shade of the row above it.
const withStripes = (rows) => {
  let alt = true;
  return rows.map(([icon, depth, name, values, flags = ""]) => {
    if (!flags.includes("same")) alt = !alt;
    return {
      icon,
      depth,
      name,
      values: values.split("|"),
      alt,
      hot: flags.includes("hot"),
      group: flags.includes("group"),
      open: flags.includes("open"),
      toggle: flags.includes("open") || flags.includes("closed"),
    };
  });
};

const SensorRow = ({ row }) => {
  const Icon = icons[row.icon];
  return (
    <tr>
      <NameCell scope="row">
        <NameLine $depth={row.depth}>
          <ToggleSlot>
            {row.toggle && (
              <Toggle type="button" aria-expanded={row.open} aria-label={row.name}>
                <Chevron open={row.open} />
              </Toggle>
            )}
          </ToggleSlot>
          <IconSlot>{Icon && <Icon />}</IconSlot>
          <Label $group={row.group} $alt={row.alt}>
            {row.name}
          </Label>
        </NameLine>
      </NameCell>
      {row.values.map((value, i) => (
        <ValueCell key={i} $group={row.group} $alt={row.alt} $hot={row.hot && i === 0}>
          {value}
        </ValueCell>
      ))}
      <FillerCell />
    </tr>
  );
};

const SensorPanel = ({ rows, nameWidth, divided, scroll }) => (
  <Panel $divided={divided}>
    <TableArea>
      <Table>
        <colgroup>
          <Col $width={nameWidth} />
          <Col $width={140} />
          <Col $width={140} />
          <Col $width={140} />
          <Col $width={140} />
          <col />
        </colgroup>
        <thead>
          <tr>
            <HeadCell $first $divided={divided}>Датчик</HeadCell>
            <HeadCell $divided={divided}>Текущее</HeadCell>
            <HeadCell $divided={divided}>Минимум</HeadCell>
            <HeadCell $divided={divided}>Максимум</HeadCell>
            <HeadCell $divided={divided}>Среднее</HeadCell>
            <HeadCell as="td" $divided={divided} />
          </tr>
        </thead>
        <tbody>
          {withStripes(rows).map((row, i) => (
            <SensorRow key={i} row={row} />
          ))}
        </tbody>
      </Table>
    </TableArea>
    {scroll && (
      <ScrollBar>
        <ScrollButton type="button" aria-label="Вверх">
          <ScrollArrow />
        </ScrollButton>
        <ScrollTrack>
          <ScrollThumb />
        </ScrollTrack>
        <ScrollButton type="button" aria-label="Вниз" $down>
          <ScrollArrow down />
        </ScrollButton>
      </ScrollBar>
    )}
  </Panel>
);

const arrowRight = "M1 8h11V1l12 12-12 12v-7H1z";
const arrowLeft = "M24 8H13V1L1 13l12 12v-7h11z";

const ExpandIcon = () => (
  <svg width="54" height="26" viewBox="0 0 54 26" fill="#3797e8" stroke="#5f8db5">
    <path d={arrowLeft} />
    <path d={arrowRight} transform="translate(29 0)" />
  </svg>
);

const CollapseIcon = () => (
  <svg width="48" height="26" viewBox="0 0 48 26" fill="#3797e8" stroke="#5f8db5">
    <path d={arrowRight} />
    <path d={arrowLeft} transform="translate(23 0)" />
  </svg>
);

const InspectIcon = () => (
  <svg width="48" height="50" viewBox="0 0 48 50">
    <ellipse cx="33" cy="42" rx="13" ry="4" fill="#c4c4c4" />
    <path d="M26 34l10 2 4 6q-10 4-18 0z" fill="#d9d9d9" />
    <path d="M11 1l34 4-5 32-31-6z" fill="#e8e8ec" stroke="#b5b5bd" />
    <path d="M13 3l29 4-4 28-27-5z" fill="url(#navy)" />
    <path d="M24 31l8 15" stroke="#7a4a24" strokeWidth="5" strokeLinecap="round" />
    <circle cx="14" cy="22" r="12" fill="#cfdcf2" fillOpacity="0.85" stroke="#a8adb4" strokeWidth="2" />
    <path d="M7 19h14v9H8z" fill="#8ea6e4" opacity="0.7" />
  </svg>
);

const Monitor = ({ transform }) => (
  <g transform={transform}>
    <ellipse cx="15" cy="29" rx="9" ry="4" fill="#b9bdc0" />
    <path d="M11 22h9l1 6h-8z" fill="#9ea3a6" />
    <path d="M0 0l28 4-3 22L2 21z" fill="#dfe3e6" stroke="#8e9499" />
    <path d="M2 2l24 4-3 18L4 19z" fill="url(#screen)" />
    <path d="M3 12Q12 5 25 8l1-3L2 2z" fill="#8fd0ff" opacity="0.5" />
  </g>
);

const NetworkIcon = () => (
  <svg width="56" height="56" viewBox="0 0 56 56">
    <path d="M26 14h17v14" fill="none" stroke="#8a8a8a" strokeWidth="2" />
    <Monitor transform="translate(1 1)" />
    <Monitor transform="translate(26 23)" />
  </svg>
);

const ClockIcon = () => (
  <svg width="56" height="56" viewBox="0 0 56 56">
    <circle cx="28" cy="28" r="26.500" fill="#fff" stroke="#222" strokeWidth="2" />
    {[0, 30, 60, 90, 120, 150, 180, 210, 240, 270, 300, 330].map((a) => (
      <path
        key={a}
        d={a % 90 ? "M28 5v5" : "M28 4v7"}
        stroke="#111"
        strokeWidth="2"
        transform={`rotate(${a} 28 28)`}
      />
    ))}
    <path d="M28 28h14" stroke="#000" strokeWidth="4" strokeLinecap="round" />
    <path d="M28 28l4-21" stroke="#000" strokeWidth="2" />
    <circle cx="28" cy="28" r="3" />
  </svg>
);

const LogIcon = () => (
  <svg width="50" height="56" viewBox="0 0 50 56">
    <path d="M2 50h40v4H2z" fill="#cfcfcf" />
    <path d="M2 2h31l9 11v39H2z" fill="#f8f8f8" stroke="#a4a4a4" strokeWidth="2" />
    <path d="M33 2v11h9z" fill="#ddd" stroke="#aaa" />
    <path
      d="M9 12h22M9 17h28M9 22h28M9 27h28M9 32h28M9 37h20M9 42h18M9 10v34M16 10v34M24 10v34M31 14v20"
      fill="none"
      stroke="#c6c6c6"
      strokeWidth="1.500"
    />
    <path
      d="M35 32h6v8h8v6h-8v8h-6v-8h-8v-6h8z"
      fill="#b4dc50"
      stroke="#7aa61e"
      strokeWidth="1.500"
      strokeLinejoin="round"
    />
  </svg>
);

const GearIcon = () => (
  <svg width="56" height="56" viewBox="0 0 56 56">
    <g fill="url(#metal)" stroke="#8d9396">
      {[0, 45, 90, 135, 180, 225, 270, 315].map((a) => (
        <path key={a} d="M21 12l2-10q5-2 10 0l2 10z" transform={`rotate(${a} 28 28)`} />
      ))}
      <circle cx="28" cy="28" r="20" />
    </g>
    <circle cx="28" cy="28" r="19" fill="url(#metal)" />
    <circle cx="28" cy="28" r="14" fill="#9ba3a6" />
    <circle cx="28" cy="28" r="10.500" fill="#e1e1e1" stroke="#d8dcde" strokeWidth="3" />
    <circle cx="28" cy="28" r="9" fill="none" stroke="#7d8386" />
  </svg>
);

const CloseIcon = () => (
  <svg width="44" height="42" viewBox="0 0 44 42">
    <path
      d="M3 9l9-8 10 12L32 1l9 8-11 12 11 12-9 8-10-12-10 12-9-8 11-12z"
      fill="url(#cross)"
      stroke="#3f97cc"
      strokeLinejoin="round"
    />
  </svg>
);

const App = () => (
  <>
    <GlobalStyle />
    <Gradients />
    <Window>
      <TitleBar>
        <TitleGroup>
          <AppIcon width="24" height="24" viewBox="0 0 24 24">
            <rect width="24" height="24" rx="3" fill="#16181c" />
            <path d="M6 10v10M12 10v10M18 10v10" stroke="#fff" strokeWidth="3" />
          </AppIcon>
          <Title>HWiNFO64 v7.34-4930 - Состояние датчиков</Title>
        </TitleGroup>
        <WindowButtons>
          <WindowButton type="button" aria-label="Восстановить">
            <svg width="16" height="8" viewBox="0 0 16 8">
              <path d="M1 0v5h10V0M11 3h3V0" fill="none" stroke="#fff" />
            </svg>
          </WindowButton>
          <WindowButton type="button" aria-label="Закрыть">
            <svg width="16" height="8" viewBox="0 0 16 8">
              <path d="M8 7l6-7" fill="none" stroke="#fff" />
            </svg>
          </WindowButton>
        </WindowButtons>
      </TitleBar>
      <Panels>
        <SensorPanel rows={systemRows} nameWidth={417} />
        <SensorPanel rows={cpuRows} nameWidth={447} divided scroll />
        <SensorPanel rows={boardRows} nameWidth={397} divided />
      </Panels>
      <Footer>
        <LeftTools $gap={2}>
          <ToolButton type="button" aria-label="Развернуть столбцы">
            <ExpandIcon />
          </ToolButton>
          <ToolButton type="button" aria-label="Свернуть столбцы">
            <CollapseIcon />
          </ToolButton>
        </LeftTools>
        <RightTools $gap={7}>
          <Tools $gap={16}>
            <ToolButton type="button" aria-label="Сводка">
              <InspectIcon />
            </ToolButton>
            <ToolButton type="button" aria-label="Сеть">
              <NetworkIcon />
            </ToolButton>
          </Tools>
          <Elapsed>0:19:51</Elapsed>
          <Tools $gap={6}>
            <ToolButton type="button" aria-label="Сбросить часы">
              <ClockIcon />
            </ToolButton>
            <ToolButton type="button" aria-label="Журнал">
              <LogIcon />
            </ToolButton>
            <ToolButton type="button" aria-label="Настройки">
              <GearIcon />
            </ToolButton>
            <ToolButton type="button" aria-label="Закрыть датчики" $active>
              <CloseIcon />
            </ToolButton>
          </Tools>
        </RightTools>
      </Footer>
    </Window>
  </>
);

export default App;
